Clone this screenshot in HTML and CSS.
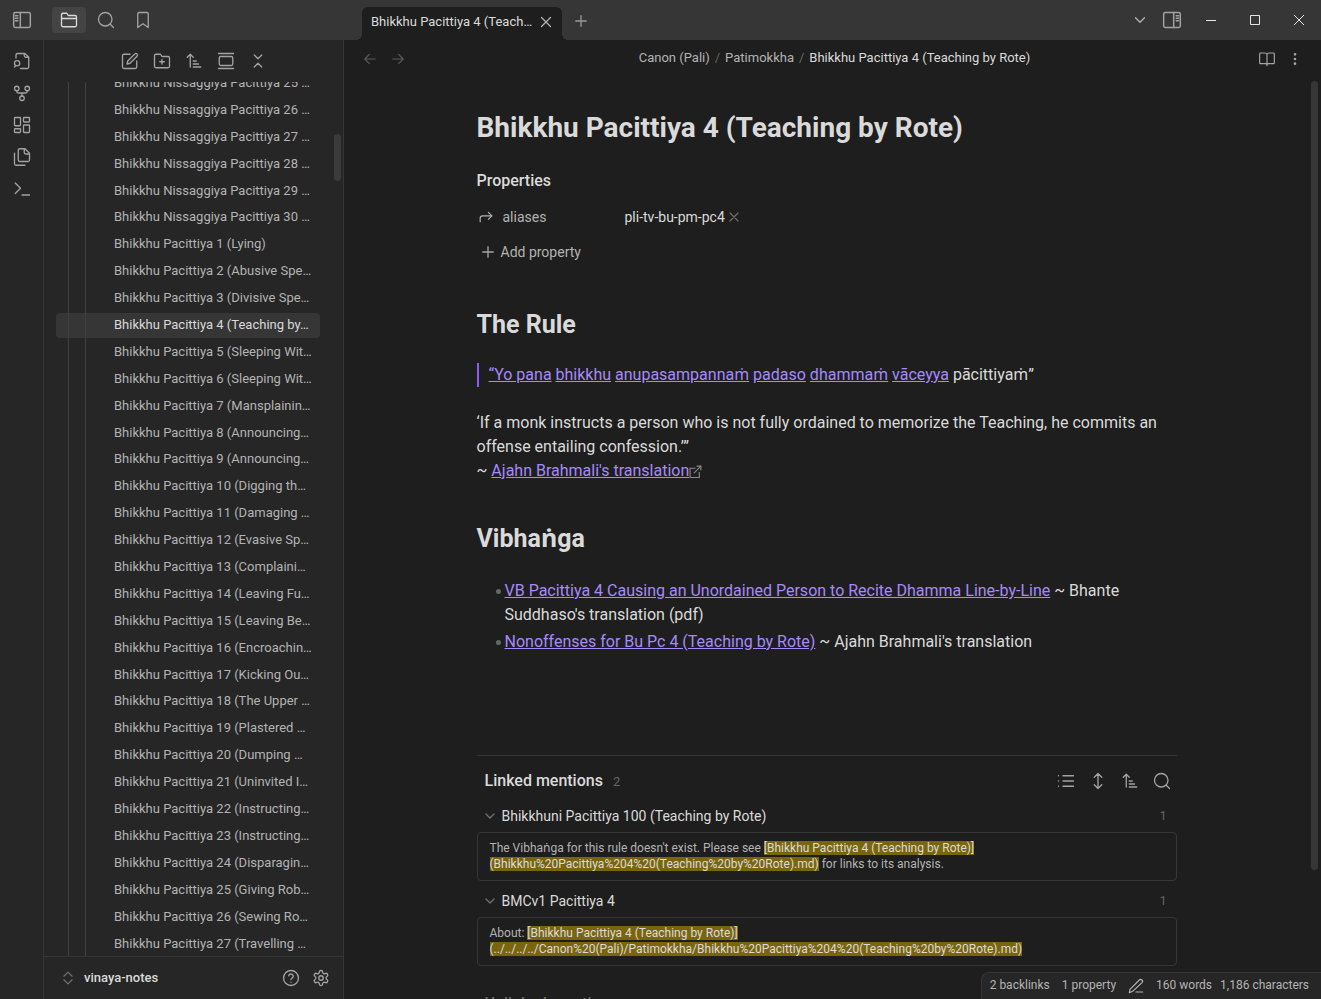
FILE: index.html
```html
<!DOCTYPE html>
<html lang="en">
<head>
<meta charset="utf-8">
<title>Bhikkhu Pacittiya 4 (Teaching by Rote) - vinaya-notes</title>
<link rel="stylesheet" href="styles.css">
</head>
<body>
<svg class="sprite" aria-hidden="true">
  <symbol id="i-search" viewBox="0 0 24 24"><circle cx="11" cy="11" r="9"/><path d="m22 22-4.300-4.300"/></symbol>
  <symbol id="i-sort" viewBox="0 0 24 24"><path d="m3 7 4-4 4 4M7 3v17M11 12h4M11 16h7M11 20h10"/></symbol>
  <symbol id="i-x" viewBox="0 0 24 24"><path d="M18 6 6 18M6 6l12 12"/></symbol>
  <symbol id="i-plus" viewBox="0 0 24 24"><path d="M5 12h14M12 5v14"/></symbol>
  <symbol id="i-down" viewBox="0 0 24 24"><path d="m6 9 6 6 6-6"/></symbol>
</svg>
<div class="app">
  <header class="titlebar">
    <div class="titlebar-left">
      <button class="tb-button toggle" aria-label="Toggle left sidebar"><svg class="icon wide" viewBox="0 0 24 24"><rect x="2" y="3" width="20" height="18" rx="2"/><path d="M10 3v18M4 7h3M4 10h3M4 13h3"/></svg></button>
      <button class="tb-button active" aria-label="Files"><svg class="icon" viewBox="0 0 24 24"><path d="M22 19a2 2 0 0 1-2 2H4a2 2 0 0 1-2-2V5a2 2 0 0 1 2-2h5l2 3h9a2 2 0 0 1 2 2zM2 10h20"/></svg></button>
      <button class="tb-button" aria-label="Search"><svg class="icon"><use href="#i-search"/></svg></button>
      <button class="tb-button" aria-label="Bookmarks"><svg class="icon" viewBox="0 0 24 24"><path d="m19 22-7-5-7 5V4a2 2 0 0 1 2-2h10a2 2 0 0 1 2 2z"/></svg></button>
    </div>
    <div class="tabs">
      <div class="tab"><span>Bhikkhu Pacittiya 4 (Teach…</span><button class="plain" aria-label="Close tab"><svg class="icon"><use href="#i-x"/></svg></button></div>
      <button class="plain new-tab" aria-label="New tab"><svg class="icon"><use href="#i-plus"/></svg></button>
    </div>
    <div class="window-controls">
      <button class="plain tab-list" aria-label="Tab list"><svg class="icon"><use href="#i-down"/></svg></button>
      <button class="tb-button" aria-label="Toggle right sidebar"><svg class="icon wide" viewBox="0 0 24 24"><rect x="2" y="3" width="20" height="18" rx="2"/><path d="M14 3v18M17 7h3M17 10h3M17 13h3"/></svg></button>
      <button class="win" aria-label="Minimize"><svg viewBox="0 0 10 10"><path d="M0 5.500h10"/></svg></button>
      <button class="win" aria-label="Maximize"><svg viewBox="0 0 10 10"><path d="M.5.500h9v9h-9z"/></svg></button>
      <button class="win" aria-label="Close"><svg viewBox="0 0 10 10"><path d="m0 0 10 10M10 0 0 10"/></svg></button>
    </div>
  </header>
  <div class="workspace">
    <nav class="ribbon" aria-label="Ribbon">
      <button class="ribbon-button" aria-label="Quick switcher"><svg class="icon" viewBox="0 0 24 24"><path d="M4 8V4a2 2 0 0 1 2-2h10l5 5v13a2 2 0 0 1-2 2H10M15 2v3a2 2 0 0 0 2 2h4M2 20l1.500-2"/><circle cx="5.500" cy="15" r="3.500"/></svg></button>
      <button class="ribbon-button" aria-label="Graph view"><svg class="icon" viewBox="0 0 24 24"><circle cx="12" cy="19" r="3"/><circle cx="5" cy="6" r="3"/><circle cx="19" cy="6" r="3"/><path d="M5 9v1a2 2 0 0 0 2 2h10a2 2 0 0 0 2-2V9M12 12v4"/></svg></button>
      <button class="ribbon-button" aria-label="New canvas"><svg class="icon" viewBox="0 0 24 24"><rect x="2" y="2" width="8" height="11" rx="1"/><rect x="14" y="2" width="8" height="6" rx="1"/><rect x="14" y="12" width="8" height="10" rx="1"/><rect x="2" y="17" width="8" height="5" rx="1"/></svg></button>
      <button class="ribbon-button" aria-label="Templates"><svg class="icon" viewBox="0 0 24 24"><path d="M16 1H9a2 2 0 0 0-2 2v13a2 2 0 0 0 2 2h11a2 2 0 0 0 2-2V7zM15 1v5a2 2 0 0 0 2 2h5M2 7v14a2 2 0 0 0 2 2h12"/></svg></button>
      <button class="ribbon-button" aria-label="Command palette"><svg class="icon" viewBox="0 0 24 24"><path d="m3 18 7-7-7-7M12 20h10"/></svg></button>
    </nav>
    <aside class="sidebar">
      <div class="toolbar">
        <button class="tool" aria-label="New note"><svg class="icon" viewBox="0 0 24 24"><path d="M12 3H4a2 2 0 0 0-2 2v15a2 2 0 0 0 2 2h15a2 2 0 0 0 2-2v-8"/><path d="M18.400 2.600a2.100 2.100 0 0 1 3 3L12 15l-4 1 1-4z"/></svg></button>
        <button class="tool" aria-label="New folder"><svg class="icon" viewBox="0 0 24 24"><path d="M4 21h16a2 2 0 0 0 2-2V8a2 2 0 0 0-2-2h-8l-2-3H4a2 2 0 0 0-2 2v14a2 2 0 0 0 2 2zM12 10v6M9 13h6"/></svg></button>
        <button class="tool" aria-label="Sort order"><svg class="icon"><use href="#i-sort"/></svg></button>
        <button class="tool" aria-label="Auto-reveal current file"><svg class="icon" viewBox="0 0 24 24"><rect x="3" y="6" width="18" height="12" rx="2"/><path d="M2 2h20M2 22h20"/></svg></button>
        <button class="tool" aria-label="Collapse all"><svg class="icon" viewBox="0 0 24 24"><path d="m7 20 5-5 5 5M7 4l5 5 5-5"/></svg></button>
      </div>
      <div class="files">
        <ul class="file-list">
          <li>Bhikkhu Nissaggiya Pacittiya 25 …</li>
          <li>Bhikkhu Nissaggiya Pacittiya 26 …</li>
          <li>Bhikkhu Nissaggiya Pacittiya 27 …</li>
          <li>Bhikkhu Nissaggiya Pacittiya 28 …</li>
          <li>Bhikkhu Nissaggiya Pacittiya 29 …</li>
          <li>Bhikkhu Nissaggiya Pacittiya 30 …</li>
          <li>Bhikkhu Pacittiya 1 (Lying)</li>
          <li>Bhikkhu Pacittiya 2 (Abusive Spe…</li>
          <li>Bhikkhu Pacittiya 3 (Divisive Spe…</li>
          <li class="selected">Bhikkhu Pacittiya 4 (Teaching by…</li>
          <li>Bhikkhu Pacittiya 5 (Sleeping Wit…</li>
          <li>Bhikkhu Pacittiya 6 (Sleeping Wit…</li>
          <li>Bhikkhu Pacittiya 7 (Mansplainin…</li>
          <li>Bhikkhu Pacittiya 8 (Announcing…</li>
          <li>Bhikkhu Pacittiya 9 (Announcing…</li>
          <li>Bhikkhu Pacittiya 10 (Digging th…</li>
          <li>Bhikkhu Pacittiya 11 (Damaging …</li>
          <li>Bhikkhu Pacittiya 12 (Evasive Sp…</li>
          <li>Bhikkhu Pacittiya 13 (Complaini…</li>
          <li>Bhikkhu Pacittiya 14 (Leaving Fu…</li>
          <li>Bhikkhu Pacittiya 15 (Leaving Be…</li>
          <li>Bhikkhu Pacittiya 16 (Encroachin…</li>
          <li>Bhikkhu Pacittiya 17 (Kicking Ou…</li>
          <li>Bhikkhu Pacittiya 18 (The Upper …</li>
          <li>Bhikkhu Pacittiya 19 (Plastered …</li>
          <li>Bhikkhu Pacittiya 20 (Dumping …</li>
          <li>Bhikkhu Pacittiya 21 (Uninvited I…</li>
          <li>Bhikkhu Pacittiya 22 (Instructing…</li>
          <li>Bhikkhu Pacittiya 23 (Instructing…</li>
          <li>Bhikkhu Pacittiya 24 (Disparagin…</li>
          <li>Bhikkhu Pacittiya 25 (Giving Rob…</li>
          <li>Bhikkhu Pacittiya 26 (Sewing Ro…</li>
          <li>Bhikkhu Pacittiya 27 (Travelling …</li>
        </ul>
        <div class="guide"></div>
        <div class="guide inner"></div>
        <div class="thumb"></div>
      </div>
      <div class="vault">
        <svg class="icon small chooser" viewBox="0 0 24 24"><path d="m5 15 7 7 7-7M5 9l7-7 7 7"/></svg>
        <span class="vault-name">vinaya-notes</span>
        <button class="tool" aria-label="Help"><svg class="icon" viewBox="0 0 24 24"><circle cx="12" cy="12" r="10"/><path d="M9 9a3 3 0 0 1 5.900 1c0 2-3 2.500-3 4M12 17.500v.1"/></svg></button>
        <button class="tool" aria-label="Settings"><svg class="icon" viewBox="0 0 24 24"><path d="M12.200 2h-.44a2 2 0 0 0-2 2v.18a2 2 0 0 1-1 1.730l-.43.250a2 2 0 0 1-2 0l-.15-.08a2 2 0 0 0-2.730.730l-.22.380a2 2 0 0 0 .73 2.730l.15.100a2 2 0 0 1 1 1.720v.510a2 2 0 0 1-1 1.740l-.15.090a2 2 0 0 0-.73 2.730l.22.380a2 2 0 0 0 2.730.730l.15-.08a2 2 0 0 1 2 0l.43.250a2 2 0 0 1 1 1.730V20a2 2 0 0 0 2 2h.44a2 2 0 0 0 2-2v-.18a2 2 0 0 1 1-1.730l.43-.25a2 2 0 0 1 2 0l.15.080a2 2 0 0 0 2.730-.73l.22-.39a2 2 0 0 0-.73-2.730l-.15-.08a2 2 0 0 1-1-1.740v-.5a2 2 0 0 1 1-1.740l.15-.09a2 2 0 0 0 .73-2.730l-.22-.38a2 2 0 0 0-2.730-.73l-.15.080a2 2 0 0 1-2 0l-.43-.25a2 2 0 0 1-1-1.730V4a2 2 0 0 0-2-2z"/><circle cx="12" cy="12" r="3"/></svg></button>
      </div>
    </aside>
    <main class="view">
      <div class="view-header">
        <div class="view-nav">
          <button class="nav-button" aria-label="Back"><svg class="icon small" viewBox="0 0 24 24"><path d="m11 20-8-8 8-8M21 12H3"/></svg></button>
          <button class="nav-button" aria-label="Forward"><svg class="icon small" viewBox="0 0 24 24"><path d="m13 4 8 8-8 8M3 12h18"/></svg></button>
        </div>
        <div class="crumbs"><span>Canon (Pali)</span><span class="slash">/</span><span>Patimokkha</span><span class="slash">/</span><span class="current">Bhikkhu Pacittiya 4 (Teaching by Rote)</span></div>
        <div class="view-actions">
          <button class="nav-button" aria-label="Reading view"><svg class="icon medium" viewBox="0 0 24 24"><path d="M12 6v16M2 3h7a3 3 0 0 1 3 3 3 3 0 0 1 3-3h7a1 1 0 0 1 1 1v14a1 1 0 0 1-1 1h-8a2 2 0 0 0-2 2 2 2 0 0 0-2-2H2a1 1 0 0 1-1-1V4a1 1 0 0 1 1-1z"/></svg></button>
          <button class="nav-button" aria-label="More options"><svg class="icon medium dots" viewBox="0 0 24 24"><circle cx="12" cy="5" r="1"/><circle cx="12" cy="12" r="1"/><circle cx="12" cy="19" r="1"/></svg></button>
        </div>
      </div>
      <div class="scroller">
        <article class="note">
          <h1>Bhikkhu Pacittiya 4 (Teaching by Rote)</h1>
          <section class="properties">
            <h3>Properties</h3>
            <div class="property">
              <svg class="icon small" viewBox="0 0 24 24"><path d="m16 4 6 6-6 6"/><path d="M2 20v-6a4 4 0 0 1 4-4h16"/></svg>
              <span class="key">aliases</span>
              <span class="value">pli-tv-bu-pm-pc4</span>
              <button class="plain remove" aria-label="Remove alias"><svg class="icon"><use href="#i-x"/></svg></button>
            </div>
            <button class="add"><svg class="icon"><use href="#i-plus"/></svg>Add property</button>
          </section>
          <h2>The Rule</h2>
          <blockquote><a href="#">“Yo pana</a> <a href="#">bhikkhu</a> <a href="#">anupasampannaṁ</a> <a href="#">padaso</a> <a href="#">dhammaṁ</a> <a href="#">vāceyya</a> pācittiyaṁ”</blockquote>
          <p>‘If a monk instructs a person who is not fully ordained to memorize the Teaching, he commits an offense entailing confession.’”<br>~ <a href="#">Ajahn Brahmali's translation</a><svg class="external" viewBox="0 0 24 24"><path d="M12 6H2v17h17V13M14 2h8v8M22 2 9 15"/></svg></p>
          <h2>Vibhaṅga</h2>
          <ul class="bullets">
            <li><a href="#">VB Pacittiya 4 Causing an Unordained Person to Recite Dhamma Line-by-Line</a> ~ Bhante Suddhaso's translation (pdf)</li>
            <li><a href="#">Nonoffenses for Bu Pc 4 (Teaching by Rote)</a> ~ Ajahn Brahmali's translation</li>
          </ul>
          <section class="backlinks">
            <div class="backlinks-head">
              <span class="head-title">Linked mentions</span><span class="count">2</span>
              <div class="head-tools">
                <button class="tool" aria-label="Collapse results"><svg class="icon" viewBox="0 0 24 24"><path d="M8 5h14M8 12h14M8 19h14M2 5h.1M2 12h.1M2 19h.1"/></svg></button>
                <button class="tool" aria-label="Show more context"><svg class="icon" viewBox="0 0 24 24"><path d="M12 2v20M7 7l5-5 5 5M7 17l5 5 5-5"/></svg></button>
                <button class="tool" aria-label="Change sort order"><svg class="icon"><use href="#i-sort"/></svg></button>
                <button class="tool" aria-label="Show search filter"><svg class="icon"><use href="#i-search"/></svg></button>
              </div>
            </div>
            <div class="mention"><svg class="icon"><use href="#i-down"/></svg><span>Bhikkhuni Pacittiya 100 (Teaching by Rote)</span><span class="tally">1</span></div>
            <div class="match">The Vibhaṅga for this rule doesn't exist. Please see <mark>[Bhikkhu Pacittiya 4 (Teaching by Rote)]<br>(Bhikkhu%20Pacittiya%204%20(Teaching%20by%20Rote).md)</mark> for links to its analysis.</div>
            <div class="mention"><svg class="icon"><use href="#i-down"/></svg><span>BMCv1 Pacittiya 4</span><span class="tally">1</span></div>
            <div class="match">About: <mark>[Bhikkhu Pacittiya 4 (Teaching by Rote)]<br>(../../../../Canon%20(Pali)/Patimokkha/Bhikkhu%20Pacittiya%204%20(Teaching%20by%20Rote).md)</mark></div>
            <div class="unlinked">Unlinked mentions</div>
          </section>
        </article>
        <div class="track"><div class="track-thumb"></div></div>
      </div>
    </main>
  </div>
  <footer class="status">
    <span>2 backlinks</span><span>1 property</span>
    <svg class="icon medium" viewBox="0 0 24 24"><path d="M12 21h10M17 3a2.800 2.800 0 0 1 4 4L7 20l-5 2 1-5z"/></svg>
    <span class="words">160 words</span><span>1,186 characters</span>
  </footer>
</div>
</body>
</html>
```
FILE: styles.css
```css
* { box-sizing: border-box; }
body {
  margin: 0;
  background: #1e1e1e;
  color: #dadada;
  font: 13px/1.3 Roboto, "Noto Sans", sans-serif;
}
button {
  display: flex;
  align-items: center;
  justify-content: center;
  padding: 0;
  border: 0;
  background: none;
  color: inherit;
  font: inherit;
}
.sprite { display: none; }
.icon {
  width: 18px;
  height: 18px;
  flex: none;
  fill: none;
  stroke: currentColor;
  stroke-width: 1.75;
  stroke-linecap: round;
  stroke-linejoin: round;
}
.icon.wide { width: 20px; height: 20px; }
.icon.medium { width: 16px; height: 16px; }
.icon.small { width: 14px; height: 14px; stroke-width: 2; }
.icon.dots { stroke-width: 2; }
.icon.chooser { color: #707070; }
.plain { color: #b3b3b3; }

.app {
  position: relative;
  display: flex;
  flex-direction: column;
  height: 100vh;
  overflow: hidden;
}

.titlebar {
  display: flex;
  flex: none;
  height: 40px;
  background: #363636;
}
.titlebar-left {
  display: flex;
  align-items: center;
  gap: 3px;
  width: 344px;
  padding-left: 5px;
}
.tb-button {
  width: 34px;
  height: 26px;
  border-radius: 4px;
  color: #a3a3a3;
}
.tb-button.toggle { margin-right: 10px; }
.tb-button.active { background: #444; color: #dadada; }
.tabs {
  display: flex;
  flex: 1;
  align-items: flex-end;
  padding-left: 18px;
}
.tab {
  position: relative;
  display: flex;
  align-items: center;
  justify-content: space-between;
  width: 200px;
  height: 33px;
  padding: 0 7px 3px 9px;
  border-radius: 6px 6px 0 0;
  background: #1e1e1e;
  white-space: nowrap;
}
.tab::before,
.tab::after {
  content: "";
  position: absolute;
  bottom: 0;
  width: 6px;
  height: 6px;
}
.tab::before { right: 100%; background: radial-gradient(circle at 0 0, transparent 6px, #1e1e1e 6px); }
.tab::after { left: 100%; background: radial-gradient(circle at 100% 0, transparent 6px, #1e1e1e 6px); }
.new-tab { width: 38px; height: 38px; color: #999; }
.window-controls { display: flex; align-items: center; }
.tab-list { width: 30px; }
.win { width: 44px; height: 40px; }
.win svg {
  width: 10px;
  height: 10px;
  overflow: visible;
  fill: none;
  stroke: #e6e6e6;
}

.workspace { display: flex; flex: 1; min-height: 0; }
.ribbon {
  display: flex;
  flex-direction: column;
  align-items: center;
  gap: 6px;
  width: 44px;
  padding-top: 8px;
  border-right: 1px solid #363636;
  background: #262626;
  color: #a3a3a3;
}
.ribbon-button { width: 30px; height: 26px; }
.sidebar {
  display: flex;
  flex-direction: column;
  width: 300px;
  border-right: 1px solid #363636;
  background: #262626;
  color: #b3b3b3;
}
.toolbar {
  display: flex;
  flex: none;
  align-items: center;
  justify-content: center;
  gap: 2px;
  height: 42px;
}
.tool { width: 30px; height: 26px; color: #a3a3a3; }
.files { position: relative; flex: 1; min-height: 0; overflow: hidden; }
.file-list {
  margin: -11px 23px 0 12px;
  padding: 0;
  list-style: none;
}
.file-list li {
  margin-bottom: 2px;
  padding: 4px 0 4px 58px;
  border-radius: 4px;
  white-space: nowrap;
}
.file-list .selected { background: #363636; color: #dadada; }
.guide {
  position: absolute;
  top: 0;
  bottom: 0;
  left: 24px;
  width: 1px;
  background: #404040;
}
.guide.inner { left: 41px; }
.thumb {
  position: absolute;
  top: 52px;
  right: 2px;
  width: 7px;
  height: 47px;
  border-radius: 4px;
  background: #3b3b3b;
}
.vault {
  display: flex;
  flex: none;
  align-items: center;
  height: 43px;
  padding: 0 7px 0 17px;
  border-top: 1px solid #363636;
}
.vault-name { flex: 1; padding-left: 9px; color: #dadada; font-weight: 500; }

.view { display: flex; flex: 1; flex-direction: column; min-width: 0; }
.view-header {
  display: flex;
  flex: none;
  align-items: center;
  justify-content: space-between;
  height: 36px;
  padding: 0 12px;
}
.view-nav, .view-actions { display: flex; padding-top: 2px; }
.nav-button { width: 28px; height: 26px; color: #a3a3a3; }
.view-nav .nav-button { color: #5a5a5a; }
.crumbs { display: flex; gap: 5px; padding-left: 4px; color: #b3b3b3; }
.slash { color: #666; }
.current { color: #dadada; }
.scroller { display: flex; flex: 1; min-height: 0; overflow: hidden; }
.track { flex: none; width: 12px; padding: 5px 3px 0 2px; }
.track-thumb { height: 86%; border-radius: 4px; background: #363636; }
.note {
  flex: 0 1 700px;
  margin: 0 auto;
  padding-top: 34px;
  font-size: 16px;
  line-height: 24px;
}
h1, h2, h3, p, blockquote, ul { margin: 0; }
h1 { font-size: 28px; line-height: 36px; font-weight: 700; }
h2 { font-size: 25px; line-height: 32px; font-weight: 700; }
h3 { font-size: 16px; line-height: 20px; font-weight: 500; }
a { color: #a68af9; }
.properties { padding: 25px 0 43px; color: #b3b3b3; font-size: 14px; }
.properties h3 { margin-bottom: 12px; color: #dadada; }
.property { display: flex; align-items: center; height: 28px; padding-left: 2px; }
.key { width: 122px; margin-left: 10px; }
.value { color: #dadada; }
.remove { width: 18px; color: #707070; }
.remove .icon { width: 16px; height: 16px; }
.add { gap: 4px; height: 28px; margin-top: 7px; padding-left: 2px; }
.add .icon { color: #a3a3a3; }
blockquote {
  margin: 22px 0 24px;
  padding-left: 10px;
  border-left: 2px solid #8a5cf5;
}
.external {
  width: 13px;
  height: 13px;
  vertical-align: -2px;
  fill: none;
  stroke: #8a8a8a;
  stroke-width: 2;
}
p { margin-bottom: 40px; }
.bullets { margin: 24px 0 0; padding: 0 0 0 28px; list-style: none; }
.bullets li { position: relative; margin-bottom: 3px; }
.bullets li::before {
  content: "";
  position: absolute;
  top: 10px;
  left: -9px;
  width: 5px;
  height: 5px;
  border-radius: 50%;
  background: #666;
}
.backlinks { margin-top: 101px; border-top: 1px solid #363636; }
.backlinks-head { display: flex; align-items: center; height: 50px; padding-left: 8px; }
.head-title { font-weight: 500; }
.count { margin-left: 10px; padding-top: 2px; color: #666; font-size: 13px; }
.head-tools { display: flex; gap: 2px; margin-left: auto; }
.mention { display: flex; align-items: center; gap: 4px; height: 20px; padding: 0 10px 0 5px; font-size: 14px; }
.mention .icon { width: 16px; height: 16px; stroke-width: 2; color: #707070; }
.tally { margin-left: auto; color: #666; font-size: 12px; }
.match {
  margin: 6px 0 10px;
  padding: 8px 12px;
  border: 1px solid #363636;
  border-radius: 4px;
  color: #b3b3b3;
  font-size: 12px;
  line-height: 1.3;
}
mark { background: #7a650f; color: #dadada; }
.unlinked { padding: 16px 8px; color: #666; font-weight: 500; }

.status {
  position: absolute;
  right: 0;
  bottom: 0;
  display: flex;
  align-items: center;
  gap: 12px;
  height: 27px;
  padding: 0 12px 0 8px;
  border: 1px solid #363636;
  border-width: 1px 0 0 1px;
  border-radius: 8px 0 0 0;
  background: #262626;
  color: #b3b3b3;
  font-size: 12px;
}
.words { margin-right: -4px; }
```
